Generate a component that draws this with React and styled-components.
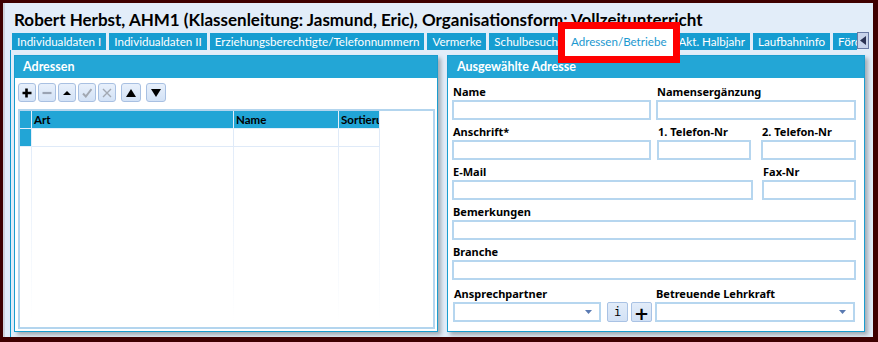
import React from 'react'
import styled, { createGlobalStyle } from 'styled-components'

const GlobalStyle = createGlobalStyle`
  html, body {
    margin: 0;
    padding: 0;
    background: #3f0000;
  }
  body {
    font-family: Lato, "Noto Sans", sans-serif;
    color: #000;
  }
`

const Window = styled.div`
  margin: 3px 5px 0 3px;
  height: 334px;
  background: #e2edf9;
  border-left: 2px solid #cdd2dc;
  display: flex;
  flex-direction: column;
  overflow: hidden;
`

const Title = styled.h1`
  margin: 0;
  height: 30px;
  padding: 4px 0 0 9px;
  box-sizing: border-box;
  font: bold 17px/26px Lato, sans-serif;
  white-space: nowrap;
`

const TabBar = styled.div`
  display: flex;
  height: 17px;
  margin-left: 7px;
  margin-right: 4px;
`

const TabList = styled.div`
  display: flex;
  flex: 1;
  min-width: 0;
  gap: 3px;
`

const Tab = styled.div`
  flex-shrink: ${p => (p.$last ? 1 : 0)};
  min-width: 0;
  overflow: hidden;
  padding: 0 5px;
  background: #169dd1;
  color: #fff;
  font: 11.6px/17px Lato, sans-serif;
  white-space: nowrap;
`

const ActiveTab = styled(Tab)`
  position: relative;
  z-index: 5;
  overflow: visible;
  margin: -4px -2px -6px -1px;
  padding: 4px 6px 0;
  background: #fff;
  color: #1b98cf;
  outline: 7px solid #ff0000;
`

const ScrollButton = styled.div`
  width: 12px;
  height: 17px;
  margin-top: -1px;
  box-sizing: border-box;
  border: 1px solid #6a7aa3;
  background: #c8d3ea;
  display: flex;
  align-items: center;
  justify-content: center;
`

const TabPage = styled.div`
  flex: 1;
  display: flex;
  gap: 9px;
  margin-left: 5px;
  padding: 5px 0 0 3px;
  border-left: 1px solid #0e98cd;
  min-height: 0;
`

const Panel = styled.section`
  width: ${p => p.$w}px;
  height: 277px;
  box-sizing: border-box;
  border: 1px solid #1a9dcf;
  background: #fff;
  box-shadow: 3px 3px 4px rgba(0, 0, 0, 0.28);
  display: flex;
  flex-direction: column;
`

const PanelHeader = styled.div`
  height: 22px;
  flex-shrink: 0;
  background: #23a6d6;
  color: #fff;
  padding-left: ${p => p.$pl}px;
  font: bold 12.5px/22px Lato, sans-serif;
`

const ListBody = styled.div`
  flex: 1;
  display: flex;
  flex-direction: column;
  padding: 5px 2px 2px 3px;
  min-height: 0;
`

const Toolbar = styled.div`
  display: flex;
  gap: 2px;
  height: 19px;
  margin-bottom: 7px;
`

const ToolButton = styled.button`
  width: ${p => p.$w || 18}px;
  height: 19px;
  margin-left: ${p => p.$ml || 0}px;
  padding: 0;
  box-sizing: border-box;
  border: 1px solid #a8c0e2;
  border-radius: 3px;
  background: linear-gradient(#e8f0fb, #d3e2f6);
  display: flex;
  align-items: center;
  justify-content: center;
`

const DataGrid = styled.div`
  flex: 1;
  border: 2px solid #b3d5ee;
  display: grid;
  grid-template-columns: 12px 202px 105px 41px;
  grid-template-rows: 18px 18px 1fr;
  align-content: start;
`

const HeadCell = styled.div`
  background: #22a5d6;
  border-right: 1px solid #e4eefa;
  border-bottom: 1px solid #e4eefa;
  padding-left: 2px;
  font: bold 11.5px/17px Lato, sans-serif;
  overflow: hidden;
  white-space: nowrap;
`

const RowHead = styled.div`
  background: #22a5d6;
  border-right: 1px solid #e4eefa;
  border-bottom: 1px solid #e4eefa;
`

const Cell = styled.div`
  border-right: 1px solid #dfeaf8;
  border-bottom: 1px solid #dfeaf8;
`

const FillCell = styled.div`
  height: 175px;
  background: linear-gradient(#e2ecf9, rgba(255, 255, 255, 0)) right top / 1px 100% no-repeat;
`

const Form = styled.div`
  display: flex;
  flex-direction: column;
  padding: 2px 8px 0 4px;
`

const Row = styled.div`
  display: flex;
  align-items: flex-end;
  margin-top: ${p => p.$mt || 0}px;
`

const Field = styled.div`
  width: ${p => p.$w}px;
  margin-left: ${p => p.$ml || 0}px;
  display: flex;
  flex-direction: column;
`

const Label = styled.div`
  height: 20px;
  box-sizing: border-box;
  padding: 5px 0 0 1px;
  font: bold 11px/14px "Noto Sans", sans-serif;
  white-space: nowrap;
`

const Input = styled.div`
  height: 20px;
  box-sizing: border-box;
  border: 2px solid #b6d6ef;
  background: #fff;
`

const Combo = styled(Input)`
  display: flex;
  align-items: center;
  justify-content: flex-end;
  padding-right: 7px;
`

const SideButton = styled.button`
  width: 21px;
  height: 20px;
  margin-left: ${p => p.$ml}px;
  padding: 0;
  box-sizing: border-box;
  border: 1px solid #a9c2e4;
  border-radius: 2px;
  background: linear-gradient(#e2ecf9, #d2e1f5);
  color: #000;
  font: ${p => (p.$mono ? '12px/16px "DejaVu Sans Mono", monospace' : 'bold 18px/22px "DejaVu Sans", sans-serif')};
`

const Arrow = () => (
  <svg width="7" height="4" viewBox="0 0 7 4">
    <path d="M0 0H7L3.5 4Z" fill="#5a7ab2" />
  </svg>
)

const glyphs = {
  plus: <path d="M4.5 0.5V9.5M0.5 5H9.5" stroke="#000" strokeWidth="2.6" />,
  minus: <path d="M0.5 5H9.5" stroke="#9aa3b3" strokeWidth="2.2" />,
  upSmall: <path d="M1 7L5 3L9 7Z" fill="#000" />,
  check: <path d="M1 5.5L3.8 8.5L9.5 1" stroke="#a2a8b2" strokeWidth="2" fill="none" />,
  cross: <path d="M1 1L9 9M9 1L1 9" stroke="#a2a8b2" strokeWidth="1.4" />,
  up: <path d="M0 9L5 1L10 9Z" fill="#000" />,
  down: <path d="M0 1L10 1L5 9Z" fill="#000" />,
}

const Icon = ({ name }) => (
  <svg width="10" height="10" viewBox="0 0 10 10">
    {glyphs[name]}
  </svg>
)

const tabs = [
  'Individualdaten I',
  'Individualdaten II',
  'Erziehungsberechtigte/Telefonnummern',
  'Vermerke',
  'Schulbesuch',
  'Adressen/Betriebe',
  'Akt. Halbjahr',
  'Laufbahninfo',
  'Förderschwerpunkte',
]

export default function App() {
  return (
    <>
      <GlobalStyle />
      <Window>
        <Title>Robert Herbst, AHM1 (Klassenleitung: Jasmund, Eric), Organisationsform: Vollzeitunterricht</Title>
        <TabBar>
          <TabList>
            {tabs.map((t, i) =>
              t === 'Adressen/Betriebe' ? (
                <ActiveTab key={t}>{t}</ActiveTab>
              ) : (
                <Tab key={t} $last={i === tabs.length - 1}>{t}</Tab>
              )
            )}
          </TabList>
          <ScrollButton>
            <svg width="6" height="9" viewBox="0 0 6 9">
              <path d="M6 0V9L0 4.5Z" fill="#2b3252" />
            </svg>
          </ScrollButton>
        </TabBar>
        <TabPage>
          <Panel $w={424}>
            <PanelHeader $pl={8}>Adressen</PanelHeader>
            <ListBody>
              <Toolbar>
                <ToolButton><Icon name="plus" /></ToolButton>
                <ToolButton><Icon name="minus" /></ToolButton>
                <ToolButton><Icon name="upSmall" /></ToolButton>
                <ToolButton><Icon name="check" /></ToolButton>
                <ToolButton><Icon name="cross" /></ToolButton>
                <ToolButton $w={20} $ml={3}><Icon name="up" /></ToolButton>
                <ToolButton $w={20} $ml={3}><Icon name="down" /></ToolButton>
              </Toolbar>
              <DataGrid>
                <RowHead />
                <HeadCell>Art</HeadCell>
                <HeadCell>Name</HeadCell>
                <HeadCell>Sortierung</HeadCell>
                <RowHead />
                <Cell />
                <Cell />
                <Cell />
                <FillCell />
                <FillCell />
                <FillCell />
                <FillCell />
              </DataGrid>
            </ListBody>
          </Panel>
          <Panel $w={418}>
            <PanelHeader $pl={9}>Ausgewählte Adresse</PanelHeader>
            <Form>
              <Row>
                <Field $w={199}><Label>Name</Label><Input /></Field>
                <Field $w={200} $ml={5}><Label>Namensergänzung</Label><Input /></Field>
              </Row>
              <Row>
                <Field $w={199}><Label>Anschrift*</Label><Input /></Field>
                <Field $w={94} $ml={6}><Label>1. Telefon-Nr</Label><Input /></Field>
                <Field $w={95} $ml={10}><Label>2. Telefon-Nr</Label><Input /></Field>
              </Row>
              <Row>
                <Field $w={301}><Label>E-Mail</Label><Input /></Field>
                <Field $w={94} $ml={9}><Label>Fax-Nr</Label><Input /></Field>
              </Row>
              <Row>
                <Field $w={404}><Label>Bemerkungen</Label><Input /></Field>
              </Row>
              <Row>
                <Field $w={404}><Label>Branche</Label><Input /></Field>
              </Row>
              <Row $mt={2}>
                <Field $w={148} $ml={1}><Label>Ansprechpartner</Label><Combo><Arrow /></Combo></Field>
                <SideButton $ml={6} $mono>i</SideButton>
                <SideButton $ml={3}>+</SideButton>
                <Field $w={200} $ml={3}><Label>Betreuende Lehrkraft</Label><Combo><Arrow /></Combo></Field>
              </Row>
            </Form>
          </Panel>
        </TabPage>
      </Window>
    </>
  )
}
